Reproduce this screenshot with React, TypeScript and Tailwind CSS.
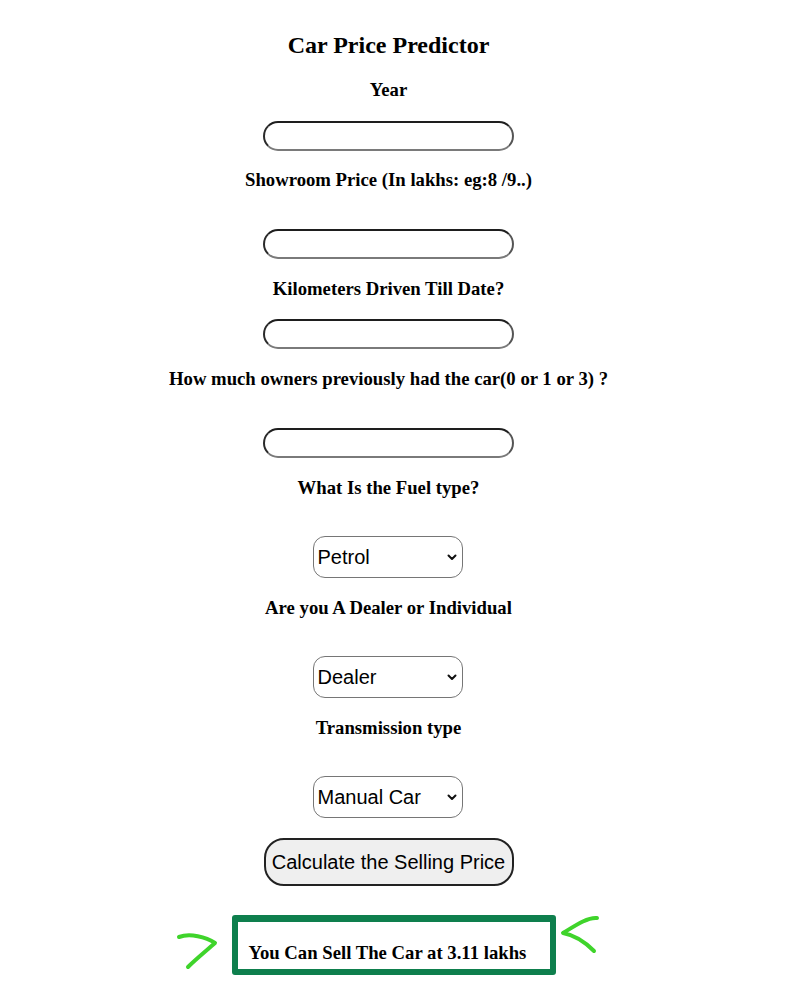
import React from "react";

const serif = { fontFamily: '"Liberation Serif", "Times New Roman", serif' };
const sans = { fontFamily: '"Liberation Sans", Arial, sans-serif' };

function Label({ children, mt }: { children: React.ReactNode; mt: string }) {
  return (
    <div className={`${mt} text-[18.72px] leading-[22px] font-bold text-black text-center`} style={serif}>
      {children}
    </div>
  );
}

function TextInput({ mt }: { mt: string }) {
  return (
    <input
      type="text"
      className={`${mt} block w-[251px] h-[30px] rounded-[15px] border-2 border-t-[#1e1e1e] border-l-[#2a2a2a] border-b-[#7a7a7a] border-r-[#555] bg-white outline-none px-3`}
    />
  );
}

function Select({ mt, value, options }: { mt: string; value: string; options: string[] }) {
  return (
    <div className={`${mt} relative w-[150px] h-[42px] -ml-[2px]`}>
      <select
        defaultValue={value}
        className="appearance-none w-full h-full rounded-[12px] border border-[#767676] bg-white pl-[4px] pr-6 text-[20px] text-black outline-none"
        style={sans}
      >
        {options.map((o) => (
          <option key={o}>{o}</option>
        ))}
      </select>
      <svg className="absolute right-[6px] top-[18px] pointer-events-none" width="10" height="7" viewBox="0 0 10 7">
        <path d="M1.5 1.5 L5 5 L8.5 1.5" fill="none" stroke="#111" strokeWidth="2" strokeLinecap="round" strokeLinejoin="round" />
      </svg>
    </div>
  );
}

export default function App() {
  return (
    <div className="w-[777px] min-h-[1005px] bg-white flex flex-col items-center pt-[31px]">
      <h2 className="text-[24px] leading-[28px] font-bold text-black" style={serif}>
        Car Price Predictor
      </h2>
      <Label mt="mt-[20px]">Year</Label>
      <TextInput mt="mt-[20px]" />
      <Label mt="mt-[18px]">Showroom Price (In lakhs: eg:8 /9..)</Label>
      <TextInput mt="mt-[38px]" />
      <Label mt="mt-[19px]">Kilometers Driven Till Date?</Label>
      <TextInput mt="mt-[19px]" />
      <Label mt="mt-[19px]">How much owners previously had the car(0 or 1 or 3) ?</Label>
      <TextInput mt="mt-[38px]" />
      <Label mt="mt-[19px]">What Is the Fuel type?</Label>
      <Select mt="mt-[37px]" value="Petrol" options={["Petrol", "Diesel", "CNG"]} />
      <Label mt="mt-[19px]">Are you A Dealer or Individual</Label>
      <Select mt="mt-[37px]" value="Dealer" options={["Dealer", "Individual"]} />
      <Label mt="mt-[19px]">Transmission type</Label>
      <Select mt="mt-[37px]" value="Manual Car" options={["Manual Car", "Automatic Car"]} />
      <button
        className="mt-[20px] w-[250px] h-[48px] rounded-[20px] border-2 border-[#222] bg-[#efefef] text-[20px] text-black"
        style={sans}
      >
        Calculate the Selling Price
      </button>
      <div className="mt-[29px] ml-[10px] relative">
        <div className="w-[324px] h-[60px] border-[6px] border-t-[7px] border-[#0e7f4d] rounded-[3px] flex items-center pl-[11px] pt-[14px]">
          <span className="text-[18.72px] leading-[22px] font-bold text-black" style={serif}>
            You Can Sell The Car at 3.11 lakhs
          </span>
        </div>
        <svg className="absolute left-[-56px] top-[14px]" width="44" height="44" viewBox="0 0 44 44">
          <path d="M3 8 C 14 4, 30 8, 39 14 C 30 22, 20 30, 12 38" fill="none" stroke="#3fd42b" strokeWidth="4" strokeLinecap="round" strokeLinejoin="round" />
        </svg>
        <svg className="absolute right-[-46px] top-[-2px]" width="44" height="44" viewBox="0 0 44 44">
          <path d="M39 5 C 30 4, 18 12, 5 20 C 16 22, 28 30, 36 38" fill="none" stroke="#3fd42b" strokeWidth="4" strokeLinecap="round" strokeLinejoin="round" />
        </svg>
      </div>
    </div>
  );
}
